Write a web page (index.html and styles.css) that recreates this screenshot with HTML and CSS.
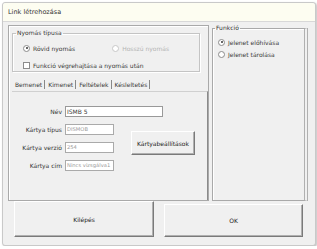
FILE: index.html
```html
<!DOCTYPE html>
<html lang="hu">
<head>
  <meta charset="UTF-8" />
  <title>Link létrehozása</title>
  <link rel="stylesheet" href="styles.css">
</head>
<body>
  <div class="window">
    <div class="titlebar">Link létrehozása</div>
    <div class="content">
      <div class="main">
        <div class="left-panel">
          <fieldset class="group press">
            <legend>Nyomás típusa</legend>
            <div class="radio-row">
              <label class="opt"><span class="radio checked"></span>Rövid nyomás</label>
              <label class="opt disabled"><span class="radio"></span>Hosszú nyomás</label>
            </div>
            <label class="opt"><span class="check"></span>Funkció végrehajtása a nyomás után</label>
          </fieldset>

          <div class="tabs">
            <span class="tab active">Bemenet</span>
            <span class="tab">Kimenet</span>
            <span class="tab">Feltételek</span>
            <span class="tab">Késleltetés</span>
          </div>
          <div class="tab-panel">
            <div class="fields">
              <div class="field">
                <span class="lbl">Név</span>
                <span class="input wide">ISMB 5</span>
              </div>
              <div class="field-block">
                <div class="field-col">
                  <div class="field">
                    <span class="lbl">Kártya típus</span>
                    <span class="input ro">DISMOB</span>
                  </div>
                  <div class="field">
                    <span class="lbl">Kártya verzió</span>
                    <span class="input ro">254</span>
                  </div>
                  <div class="field">
                    <span class="lbl">Kártya cím</span>
                    <span class="input ro">Nincs vizsgálva1</span>
                  </div>
                </div>
                <button class="btn settings">Kártyabeállítások</button>
              </div>
            </div>
          </div>
        </div>

        <fieldset class="right-panel">
          <legend>Funkció</legend>
          <label class="opt"><span class="radio checked"></span>Jelenet előhívása</label>
          <label class="opt"><span class="radio"></span>Jelenet tárolása</label>
        </fieldset>
      </div>

      <div class="buttons">
        <button class="btn big exit">Kilépés</button>
        <button class="btn big ok">OK</button>
      </div>
    </div>
  </div>
</body>
</html>
```

FILE: styles.css
```css
body {
  margin: 0;
  background: #ffffff;
  font-family: "DejaVu Sans", sans-serif;
  font-size: 6px;
  color: #3a3a3a;
}
.window {
  margin: 2px 0 0 2px;
  width: 312px;
  height: 242px;
  border: 1px solid #c9c9c9;
  border-radius: 3px;
  background: #f0f0f0;
  box-shadow: 1px 1px 2px rgba(0, 0, 0, 0.25);
  display: flex;
  flex-direction: column;
}
.titlebar {
  height: 18px;
  line-height: 19px;
  padding-left: 5px;
  background: #fdfdf1;
  border-bottom: 1px solid #d8d8d8;
  font-size: 6.5px;
  color: #333;
  border-radius: 3px 3px 0 0;
}
.content {
  padding: 3px 6px 0 5px;
  flex: 1;
}
.main {
  display: flex;
  gap: 3px;
  height: 176px;
}
.left-panel {
  width: 196px;
  border: 1px solid #a9a9a9;
  box-shadow: inset 1px 1px 0 #fff;
  padding: 4px 0 0 3px;
  display: flex;
  flex-direction: column;
}
.group {
  margin: 0;
  border: 1px solid #c4c4c4;
  box-shadow: inset 1px 1px 0 #fff, 1px 1px 0 #fff;
  padding: 0 0 0 10px;
}
legend {
  padding: 0 1px;
  margin-left: -7px;
  line-height: 6px;
  color: #333;
}
.press {
  width: 176px;
}
.radio-row {
  display: flex;
  gap: 37px;
  margin-top: 6px;
}
.opt {
  display: flex;
  align-items: center;
  gap: 3px;
  height: 12px;
}
.press > .opt {
  margin-top: 5px;
}
.opt.disabled {
  color: #b4b4b4;
}
.radio {
  width: 5px;
  height: 5px;
  border: 1px solid #8c8c8c;
  border-radius: 50%;
  background: #fff;
  position: relative;
}
.opt.disabled .radio {
  border-color: #c8c8c8;
}
.radio.checked::after {
  content: "";
  position: absolute;
  left: 1.5px;
  top: 1.5px;
  width: 2px;
  height: 2px;
  border-radius: 50%;
  background: #333;
}
.check {
  width: 5px;
  height: 5px;
  border: 1px solid #8c8c8c;
  background: #fff;
}
.tabs {
  display: flex;
  margin-top: 7px;
  height: 11px;
  align-items: center;
  padding-left: 2px;
}
.tab {
  padding: 0 2px 0 1px;
  border-right: 1px solid #888;
  margin-right: 2px;
  line-height: 9px;
}
.tab-panel {
  flex: 1;
  border-top: 1px solid #d0d0d0;
  border-right: 1px solid #8a8a8a;
  margin-top: 1px;
}
.fields {
  padding: 13px 0 0 0;
}
.field {
  display: flex;
  align-items: center;
  height: 12px;
  margin-bottom: 6px;
}
.lbl {
  width: 50px;
  text-align: right;
  padding-right: 3px;
  color: #333;
}
.input {
  height: 9px;
  line-height: 9px;
  border: 1px solid #999;
  background: #fff;
  padding: 0 1px;
  white-space: nowrap;
  overflow: hidden;
}
.input.wide {
  width: 94px;
}
.input.ro {
  width: 45px;
  border-color: #aaa;
  color: #9a9a9a;
  font-size: 5.2px;
}
.field-block {
  display: flex;
  align-items: flex-start;
}
.btn {
  font-family: "DejaVu Sans", sans-serif;
  font-size: 6px;
  color: #222;
  background: #f0f0f0;
  border: 1px solid;
  border-color: #fff #7a7a7a #7a7a7a #fff;
  box-shadow: inset -1px -1px 0 #b0b0b0;
  padding: 0;
}
.settings {
  width: 64px;
  height: 24px;
  margin: 8px 0 0 17px;
}
.right-panel {
  width: 86px;
  margin: 0;
  border: 1px solid #a9a9a9;
  box-shadow: inset 1px 1px 0 #fff;
  border-right: 4px double #b0b0b0;
  padding: 5px 0 0 5px;
}
.right-panel legend {
  margin-left: -3px;
}
.right-panel .opt {
  height: 12px;
}
.buttons {
  display: flex;
  justify-content: space-between;
  padding: 0 6px 0 6px;
}
.big {
  height: 36px;
}
.exit {
  width: 140px;
}
.ok {
  width: 139px;
  margin-top: 3px;
  height: 33px;
}
```
